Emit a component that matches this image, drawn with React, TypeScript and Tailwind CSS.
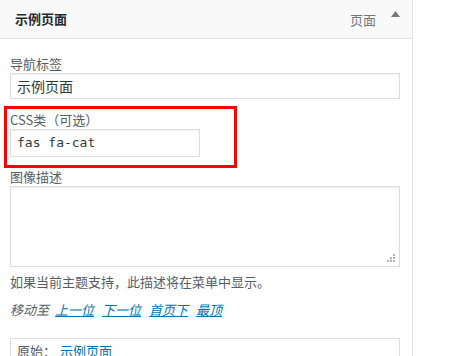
import React from "react";

const font = { fontFamily: '"Noto Sans CJK SC", "Noto Sans", sans-serif' };

export default function App() {
  return (
    <div className="w-[465px] h-[356px] bg-white overflow-hidden" style={font}>
      <div className="w-[413px] h-[356px] border-r border-[#e2e4e7] bg-white">
        <div className="h-[39px] bg-[#f9f9f9] border-b border-[#e2e4e7] flex items-center pl-[15px] pr-[12px]">
          <span className="text-[13px] font-bold text-[#23282d] leading-[18px]">示例页面</span>
          <span className="ml-auto text-[13px] text-[#72777c] leading-[18px] mr-[15px] mt-[1px]">页面</span>
          <svg width="9" height="6" viewBox="0 0 9 6" className="mb-[10px]">
            <polygon points="4.5,0 9,6 0,6" fill="#72777c" />
          </svg>
        </div>
        <div className="pt-[16px] pl-[10px]">
          <div className="text-[13px] leading-[18px] text-[#555d66]">导航标签</div>
          <div className="w-[390px] h-[26px] border border-[#dddddd] shadow-[inset_0_1px_2px_rgba(0,0,0,0.07)] flex items-center pl-[6px] text-[14px] text-[#32373c]">
            示例页面
          </div>
          <div className="mt-[7px] -ml-[6px] w-[233px] border-[3px] border-[#ff0000] pl-[3px] pt-[2px] pb-[8px]">
            <div className="text-[13px] leading-[18px] text-[#555d66]">CSS类（可选）</div>
            <div
              className="w-[190px] h-[28px] border border-[#dddddd] shadow-[inset_0_1px_2px_rgba(0,0,0,0.07)] flex items-center pl-[6px] text-[13px] text-[#32373c]"
              style={{ fontFamily: '"DejaVu Sans Mono", "Liberation Mono", monospace' }}
            >
              fas fa-cat
            </div>
          </div>
          <div className="text-[13px] leading-[18px] text-[#555d66]">图像描述</div>
          <div className="relative w-[390px] h-[81px] border border-[#dddddd] shadow-[inset_0_1px_2px_rgba(0,0,0,0.07)]">
            <svg width="9" height="9" viewBox="0 0 9 9" className="absolute right-[3px] bottom-[3px]">
              <rect x="6" y="0" width="2" height="2" fill="#b4b4b4" />
              <rect x="3" y="3" width="2" height="2" fill="#b4b4b4" />
              <rect x="6" y="3" width="2" height="2" fill="#b4b4b4" />
              <rect x="0" y="6" width="2" height="2" fill="#b4b4b4" />
              <rect x="3" y="6" width="2" height="2" fill="#b4b4b4" />
              <rect x="6" y="6" width="2" height="2" fill="#b4b4b4" />
            </svg>
          </div>
          <div className="mt-[6px] text-[13px] leading-[18px] text-[#555d66]">如果当前主题支持，此描述将在菜单中显示。</div>
          <div className="mt-[10px] text-[13px] leading-[18px] italic flex gap-[8px]">
            <span className="text-[#555d66] mr-[-2px]">移动至</span>
            <span className="text-[#0073aa] underline">上一位</span>
            <span className="text-[#0073aa] underline">下一位</span>
            <span className="text-[#0073aa] underline">首页下</span>
            <span className="text-[#0073aa] underline">最顶</span>
          </div>
          <div className="mt-[19px] w-[390px] h-[40px] border border-[#dddddd] pl-[6px] pt-[3px]">
            <div className="text-[13px] leading-[18px] text-[#555d66]">
              原始：<span className="ml-[4px] text-[#0073aa]">示例页面</span>
            </div>
          </div>
        </div>
      </div>
    </div>
  );
}
